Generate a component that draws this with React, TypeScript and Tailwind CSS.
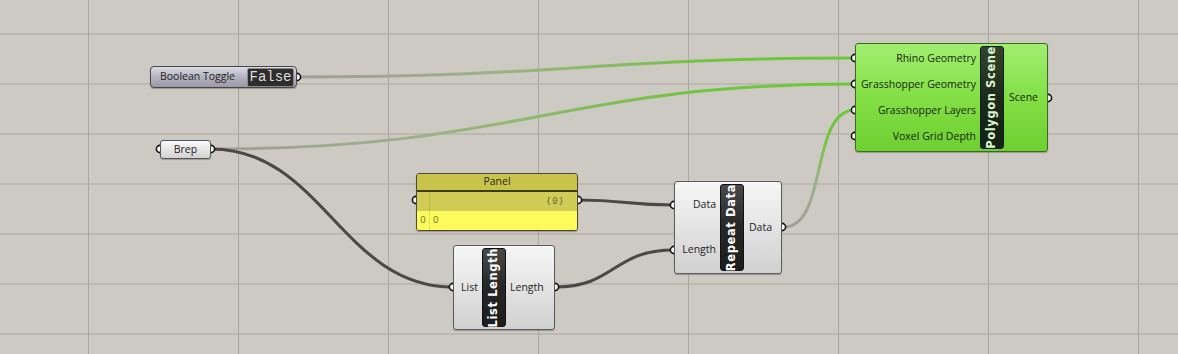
import React from "react";

const sans = "font-['Open_Sans','Noto_Sans',sans-serif]";
const barFont = "font-['DejaVu_Sans',sans-serif]";

function Port({ x, y }: { x: number; y: number }) {
  return <circle cx={x} cy={y} r={3.6} fill="#ffffff" stroke="#111" strokeWidth={1.6} />;
}

function Canvas() {
  const vx = [88, 238, 388, 538, 688, 838, 988, 1138];
  const hy = [34, 84, 134, 184, 234, 284, 334];
  return (
    <svg className="absolute left-0 top-0" width={1178} height={354}>
      <defs>
        <linearGradient id="g1" gradientUnits="userSpaceOnUse" x1={297} y1={0} x2={855} y2={0}>
          <stop offset="0" stopColor="#a09f96" />
          <stop offset="0.35" stopColor="#9bb286" />
          <stop offset="0.75" stopColor="#72c441" />
          <stop offset="1" stopColor="#6cc936" />
        </linearGradient>
        <linearGradient id="g2" gradientUnits="userSpaceOnUse" x1={211} y1={0} x2={855} y2={0}>
          <stop offset="0" stopColor="#a09f96" />
          <stop offset="0.35" stopColor="#9bb286" />
          <stop offset="0.75" stopColor="#72c441" />
          <stop offset="1" stopColor="#6cc936" />
        </linearGradient>
        <linearGradient id="g3" gradientUnits="userSpaceOnUse" x1={0} y1={227} x2={0} y2={110}>
          <stop offset="0" stopColor="#a09f96" />
          <stop offset="0.4" stopColor="#99b386" />
          <stop offset="0.8" stopColor="#6fc73c" />
          <stop offset="1" stopColor="#6cc936" />
        </linearGradient>
      </defs>
      {hy.map((y) => (
        <rect key={"h" + y} x={0} y={y - 1} width={1178} height={2} fill="#bdb9b2" />
      ))}
      {vx.map((x) => (
        <rect key={"v" + x} x={x} y={0} width={1} height={354} fill="#a9a7a1" />
      ))}
      {/* wires */}
      <path d="M297 77 C 560 77, 600 58, 855 58" stroke="url(#g1)" strokeWidth={3} fill="none" />
      <path d="M211 149 C 520 149, 560 84, 855 84" stroke="url(#g2)" strokeWidth={3} fill="none" />
      <path d="M784 227 C 828 227, 810 110, 855 110" stroke="url(#g3)" strokeWidth={3} fill="none" />
      <path d="M211 149 C 322 149, 342 287, 453 287" stroke="#4b4946" strokeWidth={3} fill="none" />
      <path d="M578 200 C 626 200, 626 205, 674 205" stroke="#4b4946" strokeWidth={3} fill="none" />
      <path d="M555 287 C 616 287, 612 250, 674 250" stroke="#4b4946" strokeWidth={3} fill="none" />
      {/* ports */}
      <Port x={297} y={77} />
      <Port x={160} y={149} />
      <Port x={211} y={149} />
      <Port x={855} y={58} />
      <Port x={855} y={84} />
      <Port x={855} y={110} />
      <Port x={855} y={136} />
      <Port x={1048} y={98} />
      <Port x={416} y={200} />
      <Port x={578} y={200} />
      <Port x={674} y={205} />
      <Port x={674} y={250} />
      <Port x={782} y={227} />
      <Port x={453} y={287} />
      <Port x={555} y={287} />
    </svg>
  );
}

function Bar({ label, green }: { label: string; green?: boolean }) {
  return (
    <div
      className={
        "my-[2px] w-[24px] shrink-0 rounded-[3px] border flex items-center justify-center " +
        (green
          ? "border-[#0f1f0c] bg-gradient-to-b from-[#34442f] via-[#1d291b] to-[#162016] text-[#dcf7cf]"
          : "border-[#111] bg-gradient-to-b from-[#4a4a4a] via-[#262626] to-[#1c1c1c] text-white")
      }
    >
      <span className={`${barFont} font-bold text-[11.5px] tracking-[0.6px] whitespace-nowrap [writing-mode:vertical-rl] rotate-180 leading-none`}>
        {label}
      </span>
    </div>
  );
}

export default function App() {
  return (
    <div className={`relative w-[1178px] h-[354px] overflow-hidden bg-[#cdc9c3] ${sans}`}>
      <Canvas />

      {/* Boolean Toggle */}
      <div className="absolute left-[150px] top-[66px] w-[147px] h-[22px] rounded-[4px] border border-[#45454c] bg-gradient-to-b from-[#dcdce4] via-[#b4b4c0] to-[#9a9aa8] flex items-center shadow-[0_1px_1px_rgba(0,0,0,0.25)]">
        <span className="pl-[9px] text-[10.5px] text-[#1e1e24]">Boolean Toggle</span>
        <div className="ml-auto mr-[2px] w-[47px] h-[19px] rounded-[2px] border border-[#8a8a8a] bg-[#2d2d2d] flex items-center justify-center">
          <span className="font-['Liberation_Mono',monospace] text-[14px] leading-none text-[#dedede]">False</span>
        </div>
      </div>

      {/* Brep */}
      <div className="absolute left-[160px] top-[140px] w-[51px] h-[19px] rounded-[3px] border border-[#555] bg-gradient-to-b from-[#fafafa] to-[#d2d2d2] flex items-center justify-center shadow-[0_1px_1px_rgba(0,0,0,0.25)]">
        <span className="text-[10.5px] text-[#222]">Brep</span>
      </div>

      {/* Polygon Scene */}
      <div className="absolute left-[855px] top-[43px] w-[193px] h-[109px] rounded-[3px] border border-[#3b6b22] bg-gradient-to-b from-[#a2ee70] via-[#82df44] to-[#6fcf31] flex shadow-[0_1px_1px_rgba(0,0,0,0.25)]">
        <div className="w-[124px] shrink-0 flex flex-col pt-[2px] pr-[4px] text-[10.5px] text-[#17260e] text-right">
          <div className="h-[26px] flex items-center justify-end">Rhino Geometry</div>
          <div className="h-[26px] flex items-center justify-end">Grasshopper Geometry</div>
          <div className="h-[26px] flex items-center justify-end">Grasshopper Layers</div>
          <div className="h-[26px] flex items-center justify-end">Voxel Grid Depth</div>
        </div>
        <Bar label="Polygon Scene" green />
        <div className="flex-1 flex items-center pl-[5px] text-[10.5px] text-[#17260e]">Scene</div>
      </div>

      {/* Panel */}
      <div className="absolute left-[416px] top-[173px] w-[162px] h-[58px] rounded-[3px] border border-[#4a4a35] overflow-hidden flex flex-col shadow-[0_1px_1px_rgba(0,0,0,0.25)]">
        <div className="h-[16px] bg-[#c8c44b] flex items-center justify-center text-[10.5px] text-[#2a2a14]">Panel</div>
        <div className="h-[2px] bg-[#3d3c22]" />
        <div className="h-[19px] bg-[#d0cc55] flex">
          <div className="w-[13px] border-r border-[#bdb948]" />
          <div className="flex-1 flex items-center justify-end pr-[12px] font-['DejaVu_Sans_Mono',monospace] text-[9px] tracking-[1px] text-[#6a6a3a]">
            {"{0}"}
          </div>
        </div>
        <div className="flex-1 bg-[#fdfb5b] flex">
          <div className="w-[13px] border-r border-[#e1de52] flex items-center justify-center text-[9.5px] text-[#6a6a2a]">0</div>
          <div className="pl-[3px] flex items-center text-[9.5px] text-[#6a6a2a]">0</div>
        </div>
      </div>

      {/* Repeat Data */}
      <div className="absolute left-[674px] top-[181px] w-[108px] h-[93px] rounded-[3px] border border-[#5a5a5a] bg-gradient-to-b from-[#f6f6f6] via-[#e4e4e4] to-[#d0d0d0] flex shadow-[0_1px_1px_rgba(0,0,0,0.25)]">
        <div className="w-[45px] shrink-0 flex flex-col justify-around pr-[4px] text-[10.5px] text-[#222] text-right">
          <div>Data</div>
          <div>Length</div>
        </div>
        <Bar label="Repeat Data" />
        <div className="flex-1 flex items-center pl-[5px] text-[10.5px] text-[#222]">Data</div>
      </div>

      {/* List Length */}
      <div className="absolute left-[453px] top-[245px] w-[102px] h-[85px] rounded-[3px] border border-[#5a5a5a] bg-gradient-to-b from-[#f6f6f6] via-[#e4e4e4] to-[#d0d0d0] flex shadow-[0_1px_1px_rgba(0,0,0,0.25)]">
        <div className="w-[28px] shrink-0 flex items-center justify-end pr-[4px] text-[10.5px] text-[#222]">List</div>
        <Bar label="List Length" />
        <div className="flex-1 flex items-center pl-[4px] text-[10.5px] text-[#222]">Length</div>
      </div>
    </div>
  );
}
